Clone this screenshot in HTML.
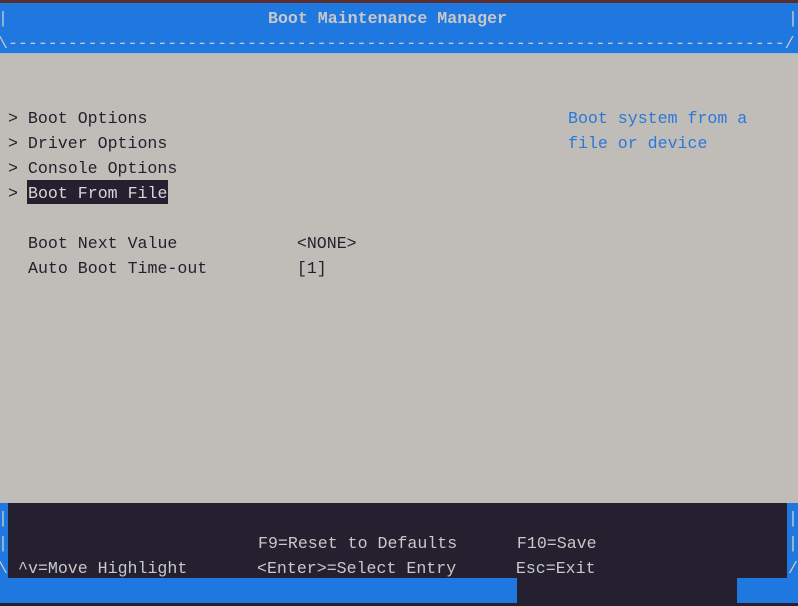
<!DOCTYPE html>
<html><head><meta charset="utf-8"><style>
html,body{margin:0;padding:0;}
body{width:798px;height:606px;position:relative;overflow:hidden;background:#c0bdb8;font-family:"Liberation Mono","DejaVu Sans Mono",monospace;font-size:16.6px;}
.r{position:absolute;left:0;right:0;height:25px;}
.t{position:absolute;white-space:pre;line-height:25px;height:25px;margin-top:3px;}
</style></head><body>
<div class="r" style="top:0;height:3px;background:#5a2d2f"></div>
<div class="r" style="top:3px;height:50px;background:#1e78e0"></div>
<div class="r" style="top:53px;height:1px;background:#a9b9cc"></div>
<div class="r" style="top:503px;height:75px;background:#1e78e0"></div>
<div style="position:absolute;left:8px;top:503px;width:779px;height:75px;background:#242030"></div>
<div class="r" style="top:578px;height:25px;background:#1e78e0"></div>
<div style="position:absolute;left:517px;top:578px;width:220px;height:25px;background:#242030"></div>
<div class="r" style="top:603px;height:3px;background:#242030"></div>

<div class="t" style="top:3px;left:-2px;color:#c8c8c8">|</div>
<div class="t" style="top:3px;left:788px;color:#c8c8c8">|</div>
<div class="t" style="top:3px;left:268px;color:#c8c8c8;font-weight:bold">Boot Maintenance Manager</div>
<div class="t" style="top:28px;left:-2px;color:#c8c8c8">\------------------------------------------------------------------------------/</div>

<div class="t" style="top:103px;left:8px;color:#24212f">&gt; Boot Options</div>
<div class="t" style="top:128px;left:8px;color:#24212f">&gt; Driver Options</div>
<div class="t" style="top:153px;left:8px;color:#24212f">&gt; Console Options</div>
<div class="t" style="top:178px;left:8px;color:#24212f">&gt; </div>
<div style="position:absolute;top:180px;left:27px;width:141px;height:24px;background:#242030"></div>
<div class="t" style="top:178px;left:28px;color:#d8d8d8">Boot From File</div>
<div class="t" style="top:228px;left:28px;color:#24212f">Boot Next Value            &lt;NONE&gt;</div>
<div class="t" style="top:253px;left:28px;color:#24212f">Auto Boot Time-out         [1]</div>
<div class="t" style="top:103px;left:568px;color:#2a78d8">Boot system from a</div>
<div class="t" style="top:128px;left:568px;color:#2a78d8">file or device</div>

<div class="t" style="top:503px;left:-2px;color:#c8c8c8">|</div>
<div class="t" style="top:528px;left:-2px;color:#c8c8c8">|</div>
<div class="t" style="top:553px;left:-2px;color:#c8c8c8">\</div>
<div class="t" style="top:503px;left:788px;color:#c8c8c8">|</div>
<div class="t" style="top:528px;left:788px;color:#c8c8c8">|</div>
<div class="t" style="top:553px;left:788px;color:#c8c8c8">/</div>
<div class="t" style="top:528px;left:258px;color:#c8c8c8">F9=Reset to Defaults      F10=Save</div>
<div class="t" style="top:553px;left:18px;color:#c8c8c8">^v=Move Highlight       &lt;Enter&gt;=Select Entry      Esc=Exit</div>
</body></html>
